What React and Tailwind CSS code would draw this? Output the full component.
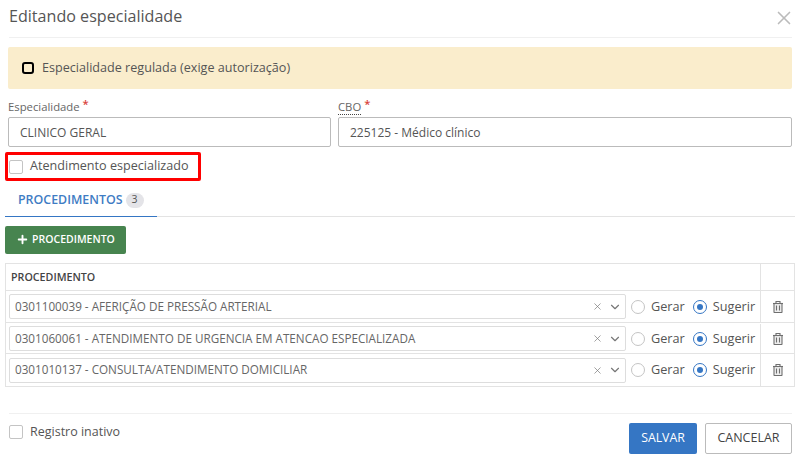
import { X, Plus, ChevronDown } from 'lucide-react';

const procedimentos = [
  { nome: '0301100039 - AFERIÇÃO DE PRESSÃO ARTERIAL', altura: 'h-[32px]' },
  { nome: '0301060061 - ATENDIMENTO DE URGENCIA EM ATENCAO ESPECIALIZADA', altura: 'h-[31px] pt-[1px]' },
  { nome: '0301010137 - CONSULTA/ATENDIMENTO DOMICILIAR', altura: 'h-[32px]' },
];

const Check = () => (
  <span className="block h-[14px] w-[14px] shrink-0 rounded-[2px] border border-[#c4c4c4] bg-white" />
);

const Lixeira = () => (
  <svg width="10" height="12" viewBox="0 0 10 12" fill="#eee" stroke="#6f6f6f" strokeWidth="1.1">
    <path d="M3 2.5V0.5h4v2" fill="none" />
    <path d="M1 2.5v8.5a0.5 0.5 0 0 0 0.5 0.5h7a0.5 0.5 0 0 0 0.5-0.5v-8.5" />
    <path d="M0 2.5h10" />
    <path d="M3.5 4.5v5M6.5 4.5v5" />
  </svg>
);

const Linha = ({ nome, altura }) => (
  <div className={`flex ${altura} border-b border-[#e3e3e3] last:border-b-0`}>
    <div className="flex flex-1 items-center pl-[3px]">
      <div className="flex h-[25px] w-[617px] shrink-0 items-center rounded-[2px] border border-[#ddd] pl-[5px] pr-[2px] text-[11.7px] text-[#666]">
        <span className="flex-1 truncate">{nome}</span>
        <X size={11} strokeWidth={1.5} className="mr-[5px] text-[#777]" />
        <ChevronDown size={14} strokeWidth={2} className="mr-[1px] text-[#777]" />
      </div>
      <span className="ml-[5px] h-[14px] w-[14px] shrink-0 rounded-full border border-[#c4c4c4] bg-white" />
      <span className="ml-[6px] text-[12.7px] text-[#555]">Gerar</span>
      <span className="ml-[8px] flex h-[14px] w-[14px] shrink-0 items-center justify-center rounded-full border border-[#3576c4]">
        <span className="h-[6px] w-[6px] rounded-full bg-[#3576c4]" />
      </span>
      <span className="ml-[6px] text-[12.7px] text-[#555]">Sugerir</span>
    </div>
    <div className="flex w-[34px] shrink-0 items-center justify-center border-l border-[#e3e3e3]">
      <Lixeira />
    </div>
  </div>
);

export default function App() {
  return (
    <div className="h-[459px] w-[805px] overflow-hidden bg-white font-['Open_Sans',sans-serif] text-[#444]">
      <div className="ml-[9px] mr-[13px] flex h-[38px] items-center justify-between border-b border-[#f0f0f0] pb-[5px]">
        <h1 className="text-[16.1px] leading-none text-[#555]">Editando especialidade</h1>
        <X size={22} strokeWidth={1.8} className="mt-[3px] mr-[-3px] text-[#bbb]" />
      </div>

      <div className="ml-[8px] mr-[13px] mt-[9px] flex h-[42px] items-center rounded-[2px] bg-[#faedcc] pl-[14px]">
        <span className="h-[12px] w-[12px] rounded-[3px] border-2 border-black" />
        <span className="ml-[8px] pt-[1px] text-[12.6px] text-[#555]">Especialidade regulada (exige autorização)</span>
      </div>

      <div className="ml-[8px] mr-[13px] mt-[9px] flex gap-[7px]">
        <div className="w-[323px]">
          <label className="block h-[19px] text-[11.3px] leading-[18px] text-[#666]">
            Especialidade <span className="relative -top-[3px] font-semibold text-[#d9433d]">*</span>
          </label>
          <div className="flex h-[30px] items-center rounded-[2px] border border-[#bbb] pl-[11px] pt-[1px] text-[12px] text-[#555]">
            CLINICO GERAL
          </div>
        </div>
        <div className="flex-1">
          <label className="block h-[19px] text-[11.3px] leading-[18px] text-[#666]">
            <span className="border-b border-dotted border-[#444]">CBO</span> <span className="relative -top-[3px] font-semibold text-[#d9433d]">*</span>
          </label>
          <div className="flex h-[30px] items-center rounded-[2px] border border-[#bbb] pl-[11px] pt-[1px] text-[12px] text-[#555]">
            225125 - Médico clínico
          </div>
        </div>
      </div>

      <div className="ml-[5px] mt-[5px] flex h-[29px] w-[196px] items-center rounded-[2px] border-[3px] border-[#f00] pl-[1px]">
        <Check />
        <span className="ml-[7px] text-[12.6px] text-[#555]">Atendimento especializado</span>
      </div>

      <div className="ml-[5px] mr-[10px] mt-[6px] flex h-[30px] border-b border-[#e3e3e3]">
        <div className="-mb-[1px] flex w-[152px] items-center border-b border-[#3576c4] pb-[3px] pl-[13px]">
          <span className="text-[12.4px] font-semibold text-[#3f7cc4]">PROCEDIMENTOS</span>
          <span className="ml-[3px] flex h-[15px] w-[18px] items-center justify-center rounded-full bg-[#e4e4e8] text-[10.5px] text-[#555]">3</span>
        </div>
      </div>

      <button className="ml-[5px] mt-[9px] flex h-[28px] w-[121px] items-center justify-center gap-[3px] rounded-[2px] bg-[#47844f] text-[10.5px] font-semibold text-white">
        <Plus size={13} strokeWidth={3.5} className="-mt-[2px]" />
        PROCEDIMENTO
      </button>

      <div className="ml-[5px] mr-[10px] mt-[9px] border border-[#e3e3e3]">
        <div className="flex h-[27px] border-b border-[#e3e3e3]">
          <div className="flex flex-1 items-center pl-[5px] pt-[1px] text-[10.7px] font-semibold text-[#444]">PROCEDIMENTO</div>
          <div className="w-[34px] border-l border-[#e3e3e3]" />
        </div>
        {procedimentos.map((p) => (
          <Linha key={p.nome} nome={p.nome} altura={p.altura} />
        ))}
      </div>

      <div className="ml-[9px] mr-[13px] mt-[26px] flex items-start justify-between border-t border-[#f0f0f0]">
        <div className="mt-[10px] flex h-[16px] items-center">
          <Check />
          <span className="ml-[7px] text-[12.5px] leading-none text-[#555]">Registro inativo</span>
        </div>
        <div className="mt-[9px] flex gap-[8px]">
          <button className="h-[31px] w-[68px] rounded-[2px] bg-[#3576c4] text-[12.3px] text-white">SALVAR</button>
          <button className="h-[31px] w-[87px] rounded-[2px] border border-[#bbb] bg-white text-[12.5px] text-[#444]">CANCELAR</button>
        </div>
      </div>
    </div>
  );
}
